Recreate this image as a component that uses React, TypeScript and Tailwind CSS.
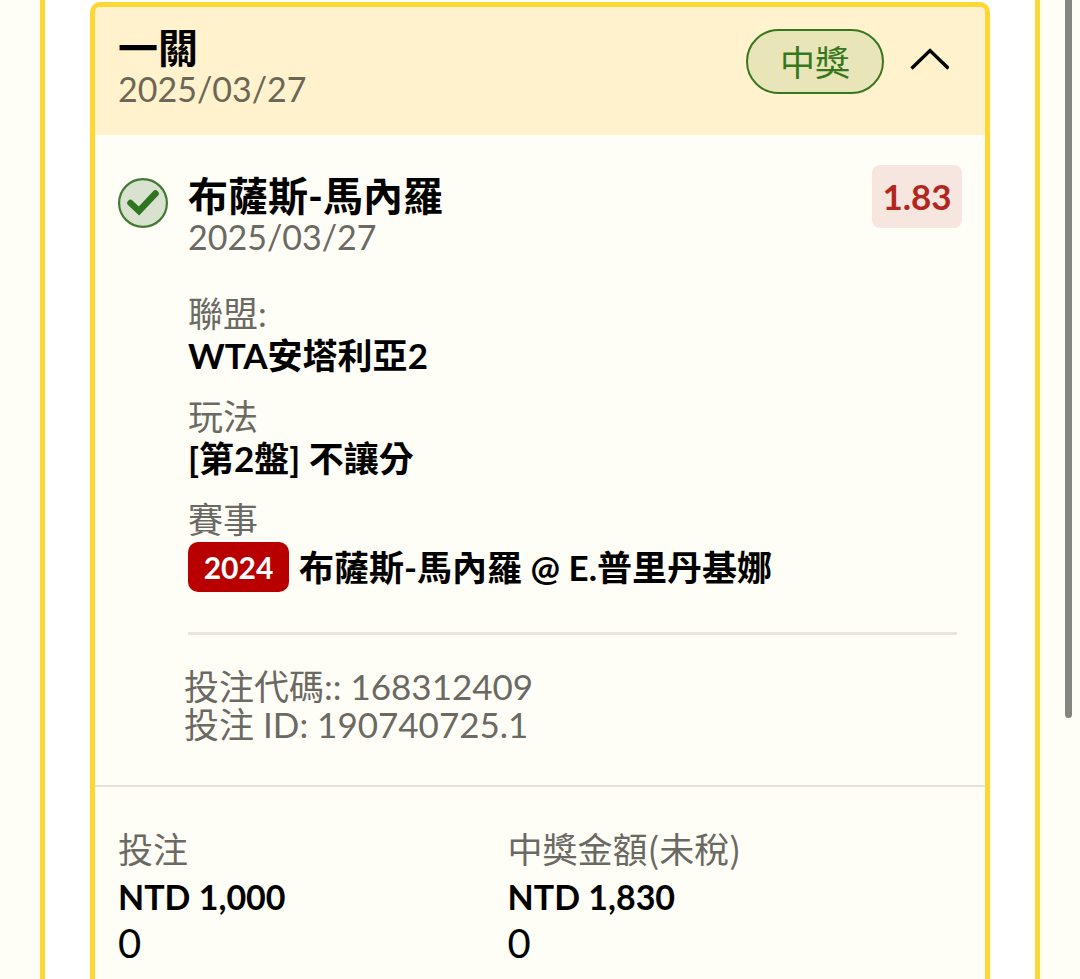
import { useState } from "react";

const FONT = "font-[Lato,'Noto_Sans_CJK_TC',sans-serif]";

function CheckBadge() {
  return (
    <svg className="w-[50px] h-[50px] mt-[13px] shrink-0" viewBox="0 0 50 50" fill="none" aria-hidden="true">
      <circle cx="25" cy="25" r="23.9" fill="#d8e2cf" stroke="#417a30" strokeWidth="2.2" />
      <path d="M12.5 25L21 33L37.5 15.5" stroke="#2f7420" strokeWidth="6.5" strokeLinecap="round" />
    </svg>
  );
}

function Detail({ label, value }: { label: string; value: string }) {
  return (
    <div className="mb-[19px] leading-[42px]">
      <dt className="text-[#6b6963]">{label}</dt>
      <dd className="font-bold">{value}</dd>
    </div>
  );
}

function Amount({ label, value }: { label: string; value: string }) {
  return (
    <div>
      <p className="mb-1 font-['Noto_Sans_CJK_TC',sans-serif] leading-[42px] text-[#6b6963]">{label}</p>
      <p className="text-[34px] leading-[47px] font-bold">{value}</p>
      <p className="text-[40px] leading-[47px]">0</p>
    </div>
  );
}

export default function App() {
  const [open, setOpen] = useState(true);

  return (
    <div className={`relative flex min-h-screen bg-[#fffef6] px-10 text-[35px] text-black ${FONT}`}>
      <main className="flex flex-1 border-x-[5px] border-[#fdd835] bg-white px-[45px] pt-[2px]">
        <article className="flex-1 rounded-t-[10px] border-[5px] border-b-0 border-[#fdd835] bg-[#fffef6]">
          <header className="flex items-start justify-between rounded-t-[5px] bg-[#fff2cc] px-[23px] pt-5 pb-[26px]">
            <div>
              <h1 className="text-[40px] leading-[42px] font-bold">一關</h1>
              <time className="block text-[34px] leading-10 text-[#6c6656]">2025/03/27</time>
            </div>
            <div className="flex items-start gap-3 pt-[2px]">
              <span className="flex h-[65px] w-[138px] items-center justify-center rounded-full border-2 border-[#38761d] bg-[#e8e6b8] pt-[2px] text-[#38761d]">
                中獎
              </span>
              <button
                type="button"
                aria-label="收合"
                aria-expanded={open}
                onClick={() => setOpen(!open)}
                className="flex h-[60px] w-[66px] items-center justify-center"
              >
                <svg className="h-[22px] w-10" viewBox="0 0 40 22" fill="none">
                  <path d="M2.5 20.5L21 2.5L39.5 20.5" stroke="black" strokeWidth="3.4" />
                </svg>
              </button>
            </div>
          </header>

          {open && (
            <>
              <section className="flex gap-5 border-b-2 border-[#e4e1dc] px-[23px] pt-[30px] pb-[42px]">
                <CheckBadge />
                <div className="flex-1">
                  <div className="flex items-start justify-between">
                    <div className="pt-[10px]">
                      <h2 className="text-[40px] leading-[42px] font-bold">布薩斯-馬內羅</h2>
                      <time className="block text-[34px] leading-10 text-[#6b6963]">2025/03/27</time>
                    </div>
                    <span className="flex h-[63px] w-[90px] items-center justify-center rounded-lg bg-[#f6e6df] font-bold text-[#b3261e]">
                      1.83
                    </span>
                  </div>

                  <dl className="mt-[35px]">
                    <Detail label="聯盟:" value="WTA安塔利亞2" />
                    <Detail label="玩法" value="[第2盤] 不讓分" />
                    <div>
                      <dt className="leading-[42px] text-[#6b6963]">賽事</dt>
                      <dd className="flex items-center gap-[10px] pt-[2px] font-bold">
                        <span className="flex h-[50px] w-[101px] items-center justify-center rounded-[10px] bg-[#b80000] text-[30px] text-white">
                          2024
                        </span>
                        <span className="leading-[50px]">布薩斯-馬內羅 @ E.普里丹基娜</span>
                      </dd>
                    </div>
                  </dl>

                  <hr className="mt-10 mr-[5px] border-t-[3px] border-[#e8e5e0]" />

                  <div className="mt-8 -ml-1 leading-[38px] text-[#6b6963]">
                    <p>投注代碼:: 168312409</p>
                    <p>投注 ID: 190740725.1</p>
                  </div>
                </div>
              </section>

              <footer className="grid grid-cols-[6fr_7fr] px-[23px] pt-10">
                <Amount label="投注" value="NTD 1,000" />
                <Amount label="中獎金額(未稅)" value="NTD 1,830" />
              </footer>
            </>
          )}
        </article>
      </main>
      {/* scroll thumb */}
      <div className="absolute top-0 right-2 h-[718px] w-[7px] rounded-b-full bg-[#85857f]" />
    </div>
  );
}
